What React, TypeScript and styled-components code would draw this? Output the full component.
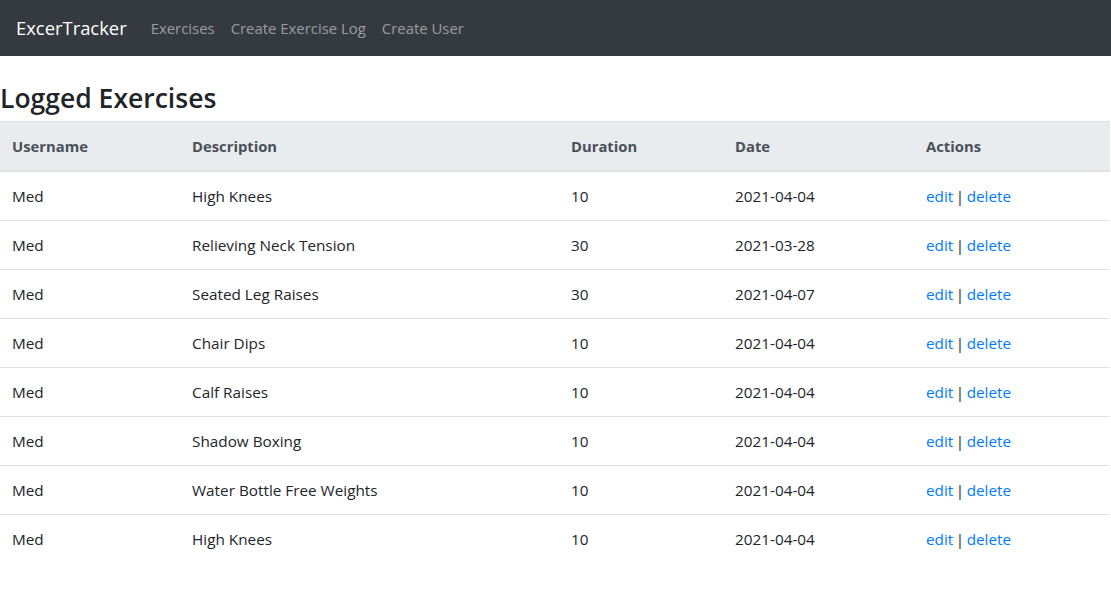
import React from 'react';
import styled, { createGlobalStyle } from 'styled-components';

interface Exercise {
  id: number;
  username: string;
  description: string;
  duration: number;
  date: string;
}

const exercises: Exercise[] = [
  { id: 1, username: 'Med', description: 'High Knees', duration: 10, date: '2021-04-04' },
  { id: 2, username: 'Med', description: 'Relieving Neck Tension', duration: 30, date: '2021-03-28' },
  { id: 3, username: 'Med', description: 'Seated Leg Raises', duration: 30, date: '2021-04-07' },
  { id: 4, username: 'Med', description: 'Chair Dips', duration: 10, date: '2021-04-04' },
  { id: 5, username: 'Med', description: 'Calf Raises', duration: 10, date: '2021-04-04' },
  { id: 6, username: 'Med', description: 'Shadow Boxing', duration: 10, date: '2021-04-04' },
  { id: 7, username: 'Med', description: 'Water Bottle Free Weights', duration: 10, date: '2021-04-04' },
  { id: 8, username: 'Med', description: 'High Knees', duration: 10, date: '2021-04-04' },
];

// column widths match the reference layout
const columns = [
  { label: 'Username', width: 180 },
  { label: 'Description', width: 379 },
  { label: 'Duration', width: 164 },
  { label: 'Date', width: 191 },
  { label: 'Actions', width: 196 },
];

const GlobalStyle = createGlobalStyle`
  * { box-sizing: border-box; }
  body {
    margin: 0;
    font-family: "Open Sans", "Noto Sans", sans-serif;
    font-size: 15.3px;
    line-height: 24px;
    color: #212529;
    background: #fff;
  }
`;

const Navbar = styled.nav`
  display: flex;
  align-items: center;
  height: 56px;
  padding: 8px 16px;
  background-color: #343a40;
`;

const Brand = styled.a`
  font-size: 18.4px;
  line-height: 30px;
  color: #fff;
  margin-right: 16px;
  text-decoration: none;
`;

const NavList = styled.ul`
  display: flex;
  list-style: none;
  margin: 0;
  padding: 0;
`;

const NavLink = styled.a`
  display: block;
  padding: 8px;
  font-size: 14.9px;
  color: rgba(255, 255, 255, 0.5);
  text-decoration: none;
`;

const Container = styled.div`
  width: 1110px;
  padding-top: 26px;
`;

const Heading = styled.h3`
  margin: 0 0 6px;
  font-size: 26.5px;
  font-weight: 600;
  line-height: 33px;
`;

const Table = styled.table`
  width: 100%;
  border-collapse: collapse;
  table-layout: fixed;
`;

const HeadCell = styled.th<{ $width: number }>`
  width: ${p => p.$width}px;
  padding: 12px;
  text-align: left;
  font-size: 14.8px;
  font-weight: 700;
  color: #495057;
  background-color: #e9ecef;
  border-top: 1px solid #dee2e6;
  border-bottom: 2px solid #dee2e6;
`;

const Cell = styled.td`
  padding: 12px;
  border-top: 1px solid #dee2e6;
`;

const ActionCell = styled(Cell)`
  word-spacing: -1.5px;
`;

const ActionLink = styled.a`
  color: #007bff;
  text-decoration: none;
  word-spacing: normal;
`;

export default function App() {
  return (
    <>
      <GlobalStyle />
      <Navbar>
        <Brand href="#">ExcerTracker</Brand>
        <NavList>
          <li><NavLink href="#">Exercises</NavLink></li>
          <li><NavLink href="#">Create Exercise Log</NavLink></li>
          <li><NavLink href="#">Create User</NavLink></li>
        </NavList>
      </Navbar>
      <Container>
        <Heading>Logged Exercises</Heading>
        <Table>
          <thead>
            <tr>
              {columns.map(c => (
                <HeadCell key={c.label} $width={c.width}>{c.label}</HeadCell>
              ))}
            </tr>
          </thead>
          <tbody>
            {exercises.map(ex => (
              <tr key={ex.id}>
                <Cell>{ex.username}</Cell>
                <Cell>{ex.description}</Cell>
                <Cell>{ex.duration}</Cell>
                <Cell>{ex.date}</Cell>
                <ActionCell>
                  <ActionLink href="#">edit</ActionLink> | <ActionLink href="#">delete</ActionLink>
                </ActionCell>
              </tr>
            ))}
          </tbody>
        </Table>
      </Container>
    </>
  );
}
